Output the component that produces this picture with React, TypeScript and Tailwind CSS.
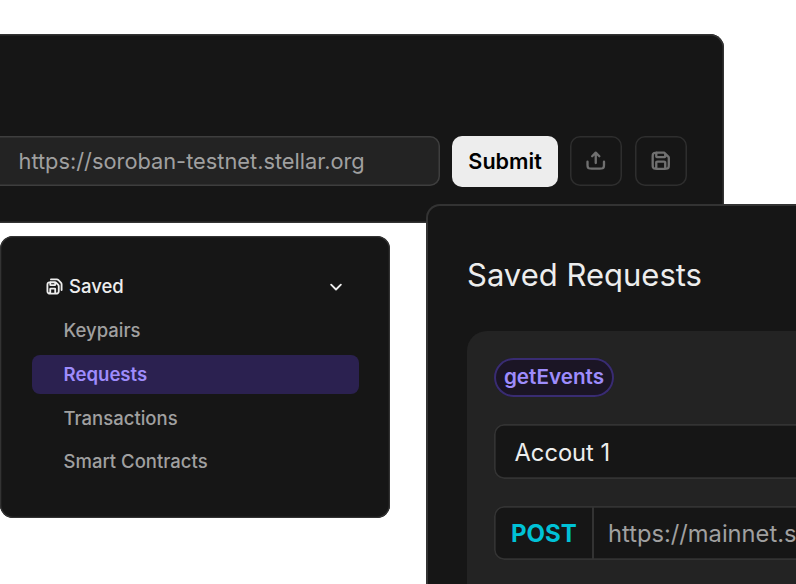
import React from "react";

type IconProps = { className?: string };

function ShareIcon({ className }: IconProps) {
  return (
    <svg className={className} viewBox="0 0 24 24" fill="none" stroke="currentColor" strokeWidth="2.600" strokeLinecap="round" strokeLinejoin="round">
      <path d="M21.200 13v3.200c0 1.700 0 2.200-.3 2.900a3 3 0 0 1-1.300 1.300c-.7.3-1.500.3-3.200.3H7.600c-1.700 0-2.500 0-3.200-.3a3 3 0 0 1-1.300-1.300c-.3-.7-.3-1.200-.3-2.900V13" />
      <path d="M16 7l-4-4-4 4M12 3v11.500" />
    </svg>
  );
}

function SaveIcon({ className }: IconProps) {
  return (
    <svg className={className} viewBox="0 0 24 24" fill="none" stroke="currentColor" strokeWidth="2.600" strokeLinecap="round" strokeLinejoin="round">
      <path d="M7 3v3.400c0 .56 0 .84.11 1.050a1 1 0 0 0 .44.440c.21.11.49.11 1.050.11h6.800c.56 0 .84 0 1.050-.11a1 1 0 0 0 .44-.44c.11-.21.11-.49.11-1.050V4m0 17v-6.400c0-.56 0-.84-.11-1.050a1 1 0 0 0-.44-.44c-.21-.11-.49-.11-1.050-.11H8.600c-.56 0-.84 0-1.050.11a1 1 0 0 0-.44.440C7 13.760 7 14.040 7 14.600V21M21 9.325V16.200c0 1.680 0 2.520-.33 3.160a3 3 0 0 1-1.310 1.310c-.64.33-1.480.33-3.160.33H7.800c-1.680 0-2.520 0-3.160-.33a3 3 0 0 1-1.310-1.310C3 18.720 3 17.880 3 16.200V7.800c0-1.680 0-2.520.33-3.160a3 3 0 0 1 1.310-1.310C5.280 3 6.120 3 7.800 3h6.870c.49 0 .74 0 .97.060a2 2 0 0 1 .58.240c.2.12.37.3.72.640l3.120 3.120c.35.350.52.520.64.720a2 2 0 0 1 .24.580c.06.23.06.48.06.965Z" />
    </svg>
  );
}

function SavedStackIcon({ className }: IconProps) {
  return (
    <svg className={className} viewBox="0 0 24 24" fill="none" stroke="currentColor" strokeWidth="2.600" strokeLinecap="round" strokeLinejoin="round">
      <path d="M6 6v3.400c0 .34.26.600.600.600h5.800c.34 0 .6-.26.6-.6V7m0 15v-6.400c0-.34-.26-.6-.6-.6H6.600c-.34 0-.6.26-.6.600V22M18 11.200V17.200c0 1.680 0 2.520-.33 3.160a3 3 0 0 1-1.310 1.310c-.64.33-1.480.33-3.160.33H6.800c-1.680 0-2.520 0-3.160-.33a3 3 0 0 1-1.310-1.310C2 19.720 2 18.880 2 17.200v-6.400c0-1.680 0-2.520.33-3.160a3 3 0 0 1 1.310-1.310C4.280 6 5.120 6 6.800 6h5.700c.8 0 1.400.2 2 .8l2.500 2.500c.7.700 1 1.100 1 1.900Z" />
      <path d="M7 2h8.300c1 0 1.600.3 2.300 1l3.400 3.400c.7.700 1 1.300 1 2.300V17" />
    </svg>
  );
}

function ChevronIcon({ className }: IconProps) {
  return (
    <svg className={className} viewBox="0 0 24 24" fill="none" stroke="currentColor" strokeWidth="2.800" strokeLinecap="round" strokeLinejoin="round">
      <path d="M4.700 8.500l7.300 7.300 7.300-7.300" />
    </svg>
  );
}

function EndpointBar() {
  return (
    <section className="absolute -left-5 top-[34px] h-[188.700px] w-[744px] rounded-[14px] bg-[#161616] pt-[101px] shadow-[inset_0_0_0_1.500px_#333]">
      <div className="flex h-[52px] items-center">
        <div className="flex h-[50.500px] w-[460.300px] items-center rounded-[10px] bg-[#232323] pl-[38.500px] text-[21.800px] text-[#a0a0a0] shadow-[inset_0_0_0_1.500px_#3e3e3e]">
          https://soroban-testnet.stellar.org
        </div>
        <button className="ml-[12.200px] flex h-[51px] w-[105.200px] items-center justify-center rounded-[10px] bg-[#ededed] text-[21.600px] font-semibold text-black">
          Submit
        </button>
        <button className="ml-[12.300px] flex h-[49.500px] w-[52px] items-center justify-center rounded-[10px] text-[#707070] shadow-[inset_0_0_0_1.500px_#2e2e2e]">
          <ShareIcon className="size-[21.500px]" />
        </button>
        <button className="ml-[13px] flex h-[49.500px] w-[52px] items-center justify-center rounded-[10px] text-[#707070] shadow-[inset_0_0_0_1.500px_#2e2e2e]">
          <SaveIcon className="size-[21.500px]" />
        </button>
      </div>
    </section>
  );
}

const items = ["Keypairs", "Requests", "Transactions", "Smart Contracts"];

function SavedMenu() {
  return (
    <nav className="absolute left-0 top-[236px] h-[282.300px] w-[390.300px] rounded-[13px] bg-[#161616] px-[31.500px] pt-[31px] shadow-[inset_0_0_0_1.300px_#333]">
      <div className="flex h-[39px] items-center pl-[14px] pr-[15px] text-[#ededed]">
        <SavedStackIcon className="size-[17px]" />
        <span className="ml-[6.500px] pt-px text-[18.500px] font-medium">Saved</span>
        <ChevronIcon className="ml-auto size-4" />
      </div>
      <ul className="mt-[5px] flex flex-col gap-[5px]">
        {items.map((item) => (
          <li
            key={item}
            className={
              item === "Requests"
                ? "flex h-[38.800px] items-center rounded-[8px] bg-[#2b2150] pl-8 pt-[2px] text-[18.600px] font-semibold text-[#9e8cfc]"
                : "flex h-[38.800px] items-center pl-8 pt-px text-[18.500px] font-medium text-[#a0a0a0]"
            }
          >
            {item}
          </li>
        ))}
      </ul>
    </nav>
  );
}

function SavedRequests() {
  return (
    <section className="absolute left-[426px] top-[204px] h-[420px] w-[420px] rounded-[14px] bg-[#161616] pl-[41px] pt-[48px] shadow-[inset_0_0_0_2px_#333]">
      <h1 className="text-[31px] leading-[46px] text-[#ededed]">Saved Requests</h1>
      <div className="mt-[33px] h-[320px] rounded-tl-[20px] bg-[#232323] pl-[27px] pt-[27px]">
        <div className="flex h-[39px] w-[120px] items-center justify-center rounded-full bg-[#1b1525] pb-[2px] text-[20.700px] font-semibold text-[#9e8cfc] shadow-[inset_0_0_0_2px_#392c72]">
          getEvents
        </div>
        <div className="mt-[27px] flex h-[54.500px] items-center rounded-l-[10px] bg-[#161616] pl-[20.500px] pt-[3px] text-[23.700px] text-[#ededed] shadow-[inset_0_0_0_1.700px_#333]">
          Accout 1
        </div>
        <div className="mt-[27.500px] flex h-[54px] items-center rounded-l-[10px] bg-[#161616] text-[24px] shadow-[inset_0_0_0_1.700px_#333]">
          <div className="flex h-full w-[100px] shrink-0 items-center border-r-2 border-[#333] pl-[17px] pt-[2px] font-bold text-[#00c2d7]">POST</div>
          <div className="whitespace-nowrap pl-[14px] pt-[2px] text-[23.700px] text-[#a0a0a0]">https://mainnet.stellar.org</div>
        </div>
      </div>
    </section>
  );
}

export default function App() {
  return (
    <main className="relative h-[584px] w-[796px] overflow-hidden bg-white font-['Inter',sans-serif]">
      <EndpointBar />
      <SavedMenu />
      <SavedRequests />
    </main>
  );
}
